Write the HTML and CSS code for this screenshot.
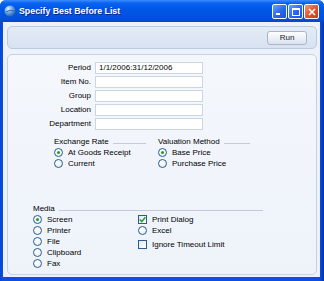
FILE: index.html
```html
<!DOCTYPE html>
<html lang="en">
<head>
  <meta charset="UTF-8">
  <meta name="viewport" content="width=device-width, initial-scale=1.0">
  <title>Specify Best Before List</title>
  <link rel="stylesheet" href="styles.css">
</head>
<body>
  <div class="window">
    <div class="titlebar">
      <svg class="app-icon" width="12" height="12" viewBox="0 0 12 12">
        <defs>
          <radialGradient id="globe" cx="0.35" cy="0.3" r="0.8">
            <stop offset="0" stop-color="#e6f2ff"/>
            <stop offset="0.45" stop-color="#6aa7e8"/>
            <stop offset="1" stop-color="#1d4f9c"/>
          </radialGradient>
        </defs>
        <circle cx="6" cy="6" r="5.5" fill="url(#globe)"/>
        <path d="M2 7 Q6 4 10.5 6" stroke="#2f6ab8" stroke-width="1" fill="none"/>
      </svg>
      <span class="title">Specify Best Before List</span>
      <div class="caption-btns">
        <span class="cbtn"><span class="min-glyph"></span></span>
        <span class="cbtn"><span class="max-glyph"></span></span>
        <span class="cbtn close">
          <svg width="8" height="8" viewBox="0 0 8 8"><path d="M1 1 L7 7 M7 1 L1 7" stroke="#fff" stroke-width="1.6"/></svg>
        </span>
      </div>
    </div>

    <div class="client">
      <div class="toolbar">
        <button class="run-btn">Run</button>
      </div>

      <div class="panel">
        <div class="form">
          <label>Period</label><span class="field">1/1/2006:31/12/2006</span>
          <label>Item No.</label><span class="field"></span>
          <label>Group</label><span class="field"></span>
          <label>Location</label><span class="field"></span>
          <label>Department</label><span class="field"></span>
        </div>

        <div class="groups">
          <div class="group">
            <div class="heading"><span>Exchange Rate</span><i class="rule"></i></div>
            <div class="opt"><span class="radio on"></span>At Goods Receipt</div>
            <div class="opt"><span class="radio"></span>Current</div>
          </div>
          <div class="group">
            <div class="heading"><span>Valuation Method</span><i class="rule"></i></div>
            <div class="opt"><span class="radio on"></span>Base Price</div>
            <div class="opt"><span class="radio"></span>Purchase Price</div>
          </div>
        </div>

        <div class="media">
          <div class="heading"><span>Media</span><i class="rule"></i></div>
          <div class="media-cols">
            <div class="col">
              <div class="opt"><span class="radio on"></span>Screen</div>
              <div class="opt"><span class="radio"></span>Printer</div>
              <div class="opt"><span class="radio"></span>File</div>
              <div class="opt"><span class="radio"></span>Clipboard</div>
              <div class="opt"><span class="radio"></span>Fax</div>
            </div>
            <div class="col">
              <div class="opt"><span class="check on">
                <svg width="7" height="7" viewBox="0 0 7 7"><path d="M0.8 3.5 L2.8 5.6 L6.3 1.2" stroke="#21a121" stroke-width="1.5" fill="none"/></svg>
              </span>Print Dialog</div>
              <div class="opt"><span class="radio"></span>Excel</div>
              <div class="opt spaced"><span class="check"></span>Ignore Timeout Limit</div>
            </div>
          </div>
        </div>
      </div>
    </div>
  </div>
</body>
</html>
```

FILE: styles.css
```css
body { margin: 0; background: #fff; font-family: 'Liberation Sans', Arial, sans-serif; }
.window { width: 324px; height: 281px; box-sizing: border-box; display: flex; flex-direction: column; background: linear-gradient(90deg, #0547d6 0, #0a4fe0 3px, #0a4fe0 320px, #0031b0 324px); border-radius: 6px 6px 0 0; overflow: hidden; }
.titlebar { height: 22px; flex: none; display: flex; align-items: center; padding: 0 5px 0 4px; background: linear-gradient(#3b8dff 0, #0a64f0 3px, #0058e8 8px, #0054e3 14px, #0050dc 19px, #0046c8 22px); }
.app-icon { margin-right: 3px; }
.title { color: #fff; font-weight: bold; font-size: 8.8px; text-shadow: 1px 1px 0 #0a2c80; flex: 1; }
.caption-btns { display: flex; gap: 1px; margin-top: 1px; }
.cbtn { width: 13px; height: 13px; border: 1px solid #fff; border-radius: 2px; background: linear-gradient(135deg, #6aa2ff, #2a66ee 55%, #1c4fd8); display: flex; align-items: center; justify-content: center; box-sizing: content-box; }
.cbtn.close { background: linear-gradient(135deg, #f39a78, #e0512c 55%, #c83a17); }
.min-glyph { width: 4px; height: 2px; background: #fff; align-self: flex-end; margin: 0 4px 3px 0; }
.max-glyph { width: 6px; height: 5px; border: 1px solid #fff; border-top-width: 2px; }

.client { flex: 1; margin: 0 4px 4px 3px; background: #edf2fa; padding: 4px 3px 2px 4px; display: flex; flex-direction: column; gap: 5px; }
.toolbar { height: 21px; border: 1px solid #bccadf; border-radius: 5px; background: linear-gradient(#e3ebf6, #d8e2f1); display: flex; align-items: center; justify-content: flex-end; padding-right: 9px; }
.run-btn { width: 40px; height: 14px; padding: 0; font-family: inherit; font-size: 8px; color: #1a1a1a; border: 1px solid #a9b6c9; border-radius: 3px; background: linear-gradient(#fdfeff, #e9eef6 60%, #dce3ee); }

.panel { flex: 1; border: 1px solid #c6d2e4; border-radius: 5px; background: linear-gradient(#f4f7fc, #eef3fa); padding-top: 7px; font-size: 8px; color: #000; }
.form { display: grid; grid-template-columns: 83px 108px; column-gap: 4px; row-gap: 2px; }
.form label { text-align: right; line-height: 12px; }
.field { height: 12px; box-sizing: border-box; border: 1px solid #ccd5e2; background: #fff; line-height: 10px; padding-left: 3px; }

.heading { display: flex; align-items: center; line-height: 11px; height: 11px; }
.rule { flex: 1; height: 1px; background: #c3cbd8; margin: 3px 0 0 4px; }
.groups { display: flex; gap: 12px; margin: 6px 0 0 46px; }
.group { width: 92px; }
.opt { display: flex; align-items: center; height: 11px; line-height: 11px; gap: 5px; white-space: nowrap; }
.radio { width: 9px; height: 9px; box-sizing: border-box; border: 1px solid #2a5c91; border-radius: 50%; background: radial-gradient(circle at 40% 35%, #fff, #e4e9f0); display: flex; align-items: center; justify-content: center; }
.radio.on::after { content: ""; width: 3px; height: 3px; border-radius: 50%; background: #1fa21f; }
.check { width: 9px; height: 9px; box-sizing: border-box; border: 1px solid #2a5c91; background: linear-gradient(135deg, #e4e8ee, #fff); display: flex; align-items: center; justify-content: center; }

.media { margin: 34px 0 0 25px; width: 230px; }
.media-cols { display: grid; grid-template-columns: 105px auto; }
.opt.spaced { margin-top: 3px; }
```
